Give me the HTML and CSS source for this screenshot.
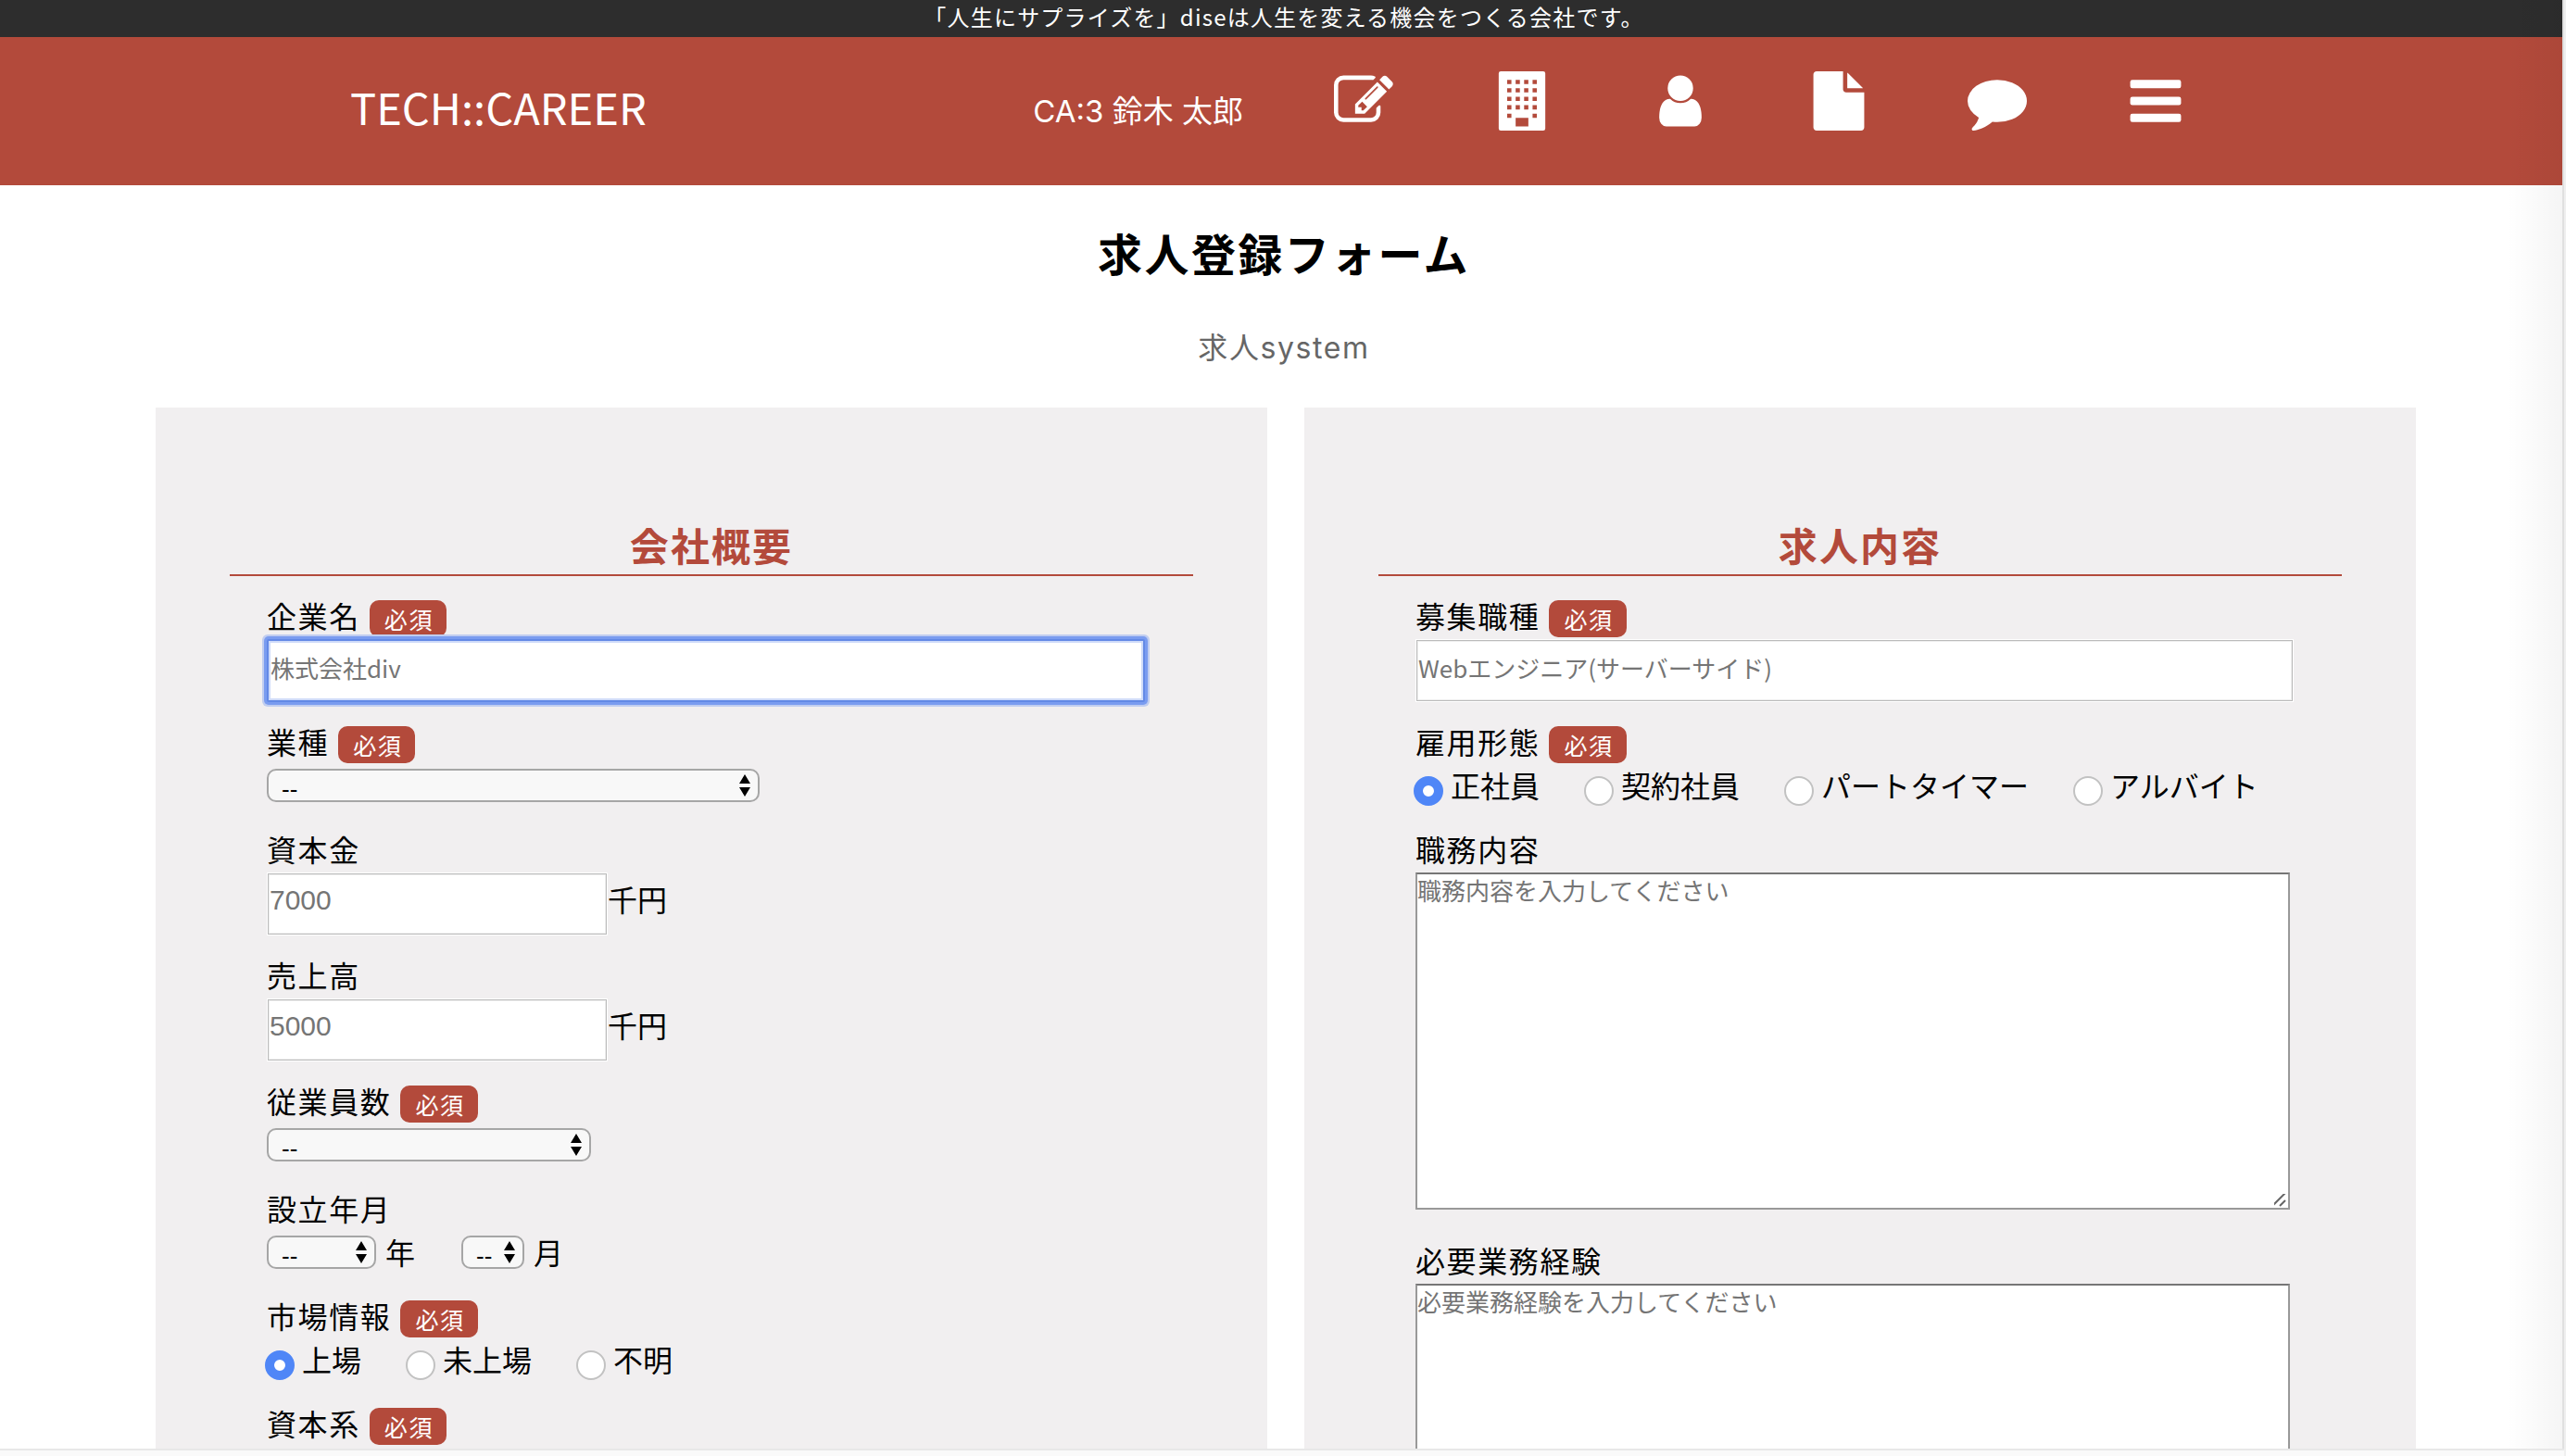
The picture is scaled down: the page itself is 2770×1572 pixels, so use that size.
FILE: index.html
```html
<!DOCTYPE html>
<html lang="ja">
<head>
<meta charset="utf-8">
<title>求人登録フォーム | TECH::CAREER</title>
<link rel="stylesheet" href="styles.css">
</head>
<body>
<div class="viewport">
  <p class="tagline">「人生にサプライズを」diseは人生を変える機会をつくる会社です。</p>
  <header class="header">
    <a class="logo" href="#">TECH::CAREER</a>
    <a class="user-name" href="#">CA:3 鈴木 太郎</a>
    <nav class="nav">
      <a class="nav-link" href="#" aria-label="求人登録"><svg class="icon" viewBox="0 0 1792 1792"><path d="M888 1184l116-116-152-152-116 116v56h96v96h56zm440-720q-16-16-33 1l-350 350q-17 17-1 33t33-1l350-350q17-17 1-33zm80 594v190q0 119-84.500 203.500t-203.500 84.500h-832q-119 0-203.500-84.500t-84.500-203.500v-832q0-119 84.500-203.500t203.500-84.500h832q63 0 117 25 15 7 18 23 3 17-9 29l-49 49q-14 14-32 8-23-6-45-6h-832q-66 0-113 47t-47 113v832q0 66 47 113t113 47h832q66 0 113-47t47-113v-126q0-13 9-22l64-64q15-15 35-7t20 29zm-96-738l288 288-672 672h-288v-288zm444 132l-92 92-288-288 92-92q28-28 68-28t68 28l152 152q28 28 28 68t-28 68z"/></svg></a>
      <a class="nav-link" href="#" aria-label="企業"><svg class="icon" viewBox="0 0 1792 1792"><path fill-rule="evenodd" d="M256 0h1280q64 0 64 64v1664q0 64-64 64h-1280q-64 0-64-64v-1664q0-64 64-64zM448 256v128h128v-128zM704 256v128h128v-128zM960 256v128h128v-128zM1216 256v128h128v-128zM448 512v128h128v-128zM704 512v128h128v-128zM960 512v128h128v-128zM1216 512v128h128v-128zM448 768v128h128v-128zM704 768v128h128v-128zM960 768v128h128v-128zM1216 768v128h128v-128zM448 1024v128h128v-128zM704 1024v128h128v-128zM960 1024v128h128v-128zM1216 1024v128h128v-128zM448 1280v128h128v-128zM1216 1280v128h128v-128zM704 1408v256h384v-256z"/></svg></a>
      <a class="nav-link" href="#" aria-label="ユーザー"><svg class="icon" viewBox="0 0 1792 1792"><path d="M1536 1399q0 109-62.500 187t-150.500 78h-854q-88 0-150.500-78t-62.500-187q0-85 8.500-160.500t31.500-152 58.500-131 94-89 134.500-34.500q131 128 313 128t313-128q76 0 134.500 34.500t94 89 58.500 131 31.500 152 8.500 160.500zm-256-887q0 159-112.500 271.500t-271.500 112.500-271.500-112.500-112.500-271.500 112.500-271.500 271.500-112.500 271.500 112.500 112.500 271.500z"/></svg></a>
      <a class="nav-link" href="#" aria-label="書類"><svg class="icon" viewBox="0 0 1792 1792"><path d="M1152 512v-472q22 14 36 28l408 408q14 14 28 36h-472zm-128 32q0 40 28 68t68 28h544v1056q0 40-28 68t-68 28h-1344q-40 0-68-28t-28-68v-1600q0-40 28-68t68-28h800v544z"/></svg></a>
      <a class="nav-link" href="#" aria-label="メッセージ"><svg class="icon" viewBox="0 0 1792 1792"><path d="M1792 896q0 174-120 321.500t-326 233-450 85.500q-70 0-145-8-198 175-460 242-49 14-114 22-17 2-30.500-9t-17.500-29v-1q-3-4-.5-12t2-10 4.500-9.500l6-9 7-8.500 8-9q7-8 31-34.500t34.500-38 31-39.500 32.500-51 27-59 26-76q-157-89-247.500-220t-90.500-281q0-130 71-248.500t191-204.500 286-136.500 348-50.500q244 0 450 85.500t326 233 120 321.500z"/></svg></a>
      <a class="nav-link" href="#" aria-label="メニュー"><svg class="icon" viewBox="0 0 1792 1792"><rect x="128" y="256" width="1536" height="256" rx="64"/><rect x="128" y="768" width="1536" height="256" rx="64"/><rect x="128" y="1280" width="1536" height="256" rx="64"/></svg></a>
    </nav>
  </header>

  <main>
    <h1 class="title">求人登録フォーム</h1>
    <p class="subtitle">求人system</p>
    <form class="panels">
      <section class="panel">
        <h2 class="panel-title">会社概要</h2>
        <div class="fields">
          <div class="field">
            <label class="label" for="company">企業名<span class="badge">必須</span></label>
            <input class="text focused" type="text" id="company" placeholder="株式会社div">
          </div>
          <div class="field">
            <label class="label" for="industry">業種<span class="badge">必須</span></label>
            <select class="select select-wide" id="industry"><option>--</option></select>
          </div>
          <div class="field">
            <label class="label" for="capital">資本金</label>
            <div class="amount"><input class="text number" type="text" id="capital" placeholder="7000"><span class="unit">千円</span></div>
          </div>
          <div class="field">
            <label class="label" for="sales">売上高</label>
            <div class="amount"><input class="text number" type="text" id="sales" placeholder="5000"><span class="unit">千円</span></div>
          </div>
          <div class="field">
            <label class="label" for="employees">従業員数<span class="badge">必須</span></label>
            <select class="select select-medium" id="employees"><option>--</option></select>
          </div>
          <div class="field">
            <span class="label">設立年月</span>
            <div class="dates">
              <label class="date"><select class="select select-year"><option>--</option></select>年</label>
              <label class="date"><select class="select select-month"><option>--</option></select>月</label>
            </div>
          </div>
          <div class="field">
            <span class="label">市場情報<span class="badge">必須</span></span>
            <div class="choices">
              <label class="choice"><input class="radio" type="radio" name="market" checked>上場</label>
              <label class="choice"><input class="radio" type="radio" name="market">未上場</label>
              <label class="choice"><input class="radio" type="radio" name="market">不明</label>
            </div>
          </div>
          <div class="field">
            <span class="label">資本系<span class="badge">必須</span></span>
          </div>
        </div>
      </section>

      <section class="panel">
        <h2 class="panel-title">求人内容</h2>
        <div class="fields">
          <div class="field">
            <label class="label" for="job">募集職種<span class="badge">必須</span></label>
            <input class="text" type="text" id="job" placeholder="Webエンジニア(サーバーサイド)">
          </div>
          <div class="field">
            <span class="label">雇用形態<span class="badge">必須</span></span>
            <div class="choices">
              <label class="choice"><input class="radio" type="radio" name="employment" checked>正社員</label>
              <label class="choice"><input class="radio" type="radio" name="employment">契約社員</label>
              <label class="choice"><input class="radio" type="radio" name="employment">パートタイマー</label>
              <label class="choice"><input class="radio" type="radio" name="employment">アルバイト</label>
            </div>
          </div>
          <div class="field">
            <label class="label" for="duties">職務内容</label>
            <textarea class="textarea" id="duties" placeholder="職務内容を入力してください"></textarea>
          </div>
          <div class="field">
            <label class="label" for="experience">必要業務経験</label>
            <textarea class="textarea" id="experience" placeholder="必要業務経験を入力してください"></textarea>
          </div>
        </div>
      </section>
    </form>
  </main>
</div>
<div class="scroll-track"></div>
</body>
</html>
```
FILE: styles.css
```css
* {
  box-sizing: border-box;
}

body {
  display: flex;
  flex-direction: column;
  height: 100vh;
  margin: 0;
  overflow: hidden;
  border-right: 2px solid #f0f0f0;
  background: #fff;
  color: #000;
  font-family: "Noto Sans CJK JP", sans-serif;
  font-size: 32px;
}

a {
  color: inherit;
  text-decoration: none;
}

.viewport {
  position: relative;
  flex: 1;
  min-height: 0;
  overflow: hidden;
  border-right: 2px solid #e0e0e0;
}

.viewport::after {
  content: "";
  position: absolute;
  inset: 0 0 0 auto;
  width: 60px;
  background: linear-gradient(to right, transparent, rgba(0, 0, 0, 0.04));
  pointer-events: none;
}

.scroll-track {
  height: 8px;
  border-top: 2px solid #e8e8e8;
  background: #fafafa;
}

.tagline {
  margin: 0;
  padding: 0 0 4px 6px;
  background: #2d2d2d;
  color: #fff;
  font-size: 24px;
  line-height: 36px;
  letter-spacing: 0.05em;
  text-align: center;
}

.header {
  display: flex;
  align-items: center;
  height: 160px;
  padding: 0 354px 0 378px;
  background: #b34a3b;
  color: #fff;
}

.logo {
  padding-bottom: 10px;
  font-size: 47px;
  line-height: 72px;
}

.user-name {
  margin-left: auto;
  padding-bottom: 4px;
  font-family: Inter, "Noto Sans CJK JP", sans-serif;
  font-size: 33px;
}

.nav {
  display: flex;
  margin-left: 44px;
  padding-bottom: 22px;
}

.nav-link {
  display: flex;
  justify-content: center;
  width: 171px;
}

.icon {
  width: 64px;
  height: 64px;
  fill: #fff;
}

.title {
  margin: 36px 0 0;
  padding-left: 6px;
  font-size: 48px;
  line-height: 72px;
  letter-spacing: 0.05em;
  text-align: center;
}

.subtitle {
  margin: 44px 0 40px;
  padding-left: 6px;
  color: #666;
  font-family: Inter, "Noto Sans CJK JP", sans-serif;
  line-height: 48px;
  letter-spacing: 0.05em;
  text-align: center;
}

.panels {
  display: grid;
  grid-template-columns: 1fr 1fr;
  gap: 40px;
  padding: 0 158px 0 168px;
}

.panel {
  padding: 120px 80px;
  background: #f1eff0;
}

.panel-title {
  margin: 0 0 26px;
  padding-bottom: 4px;
  border-bottom: 2px solid #b34a3b;
  color: #b34a3b;
  font-size: 42px;
  line-height: 56px;
  letter-spacing: 0.05em;
  text-align: center;
}

.fields {
  display: flex;
  flex-direction: column;
  gap: 26px;
  padding: 0 40px;
}

.field {
  display: flex;
  flex-direction: column;
  align-items: flex-start;
  gap: 2px;
}

.label {
  display: flex;
  align-items: flex-start;
  gap: 10px;
  height: 40px;
  line-height: 32px;
  letter-spacing: 0.05em;
}

.badge {
  padding: 0 14px 0 16px;
  border-radius: 10px;
  background: #b34a3b;
  color: #fff;
  font-size: 25px;
  line-height: 40px;
}

.text {
  width: calc(100% - 12px);
  height: 68px;
  padding: 2px 2px 10px;
  border: 1px solid #fff;
  background: #fff;
  box-shadow: inset 0 0 0 1px #bbb, inset 0 0 0 2px #eee;
  font-family: inherit;
  font-size: 26px;
}

.text::placeholder,
.textarea::placeholder {
  color: #757575;
}

.focused {
  position: relative;
  border: 2px solid #6389e6;
  border-radius: 2px;
  outline: none;
  box-shadow: 0 0 0 3px #7a9cf0, 0 0 0 5px #c0cdf0, inset 0 0 0 2px #cfdbf9;
}

.amount {
  display: flex;
  align-items: center;
}

.number {
  width: 368px;
  font-family: "Liberation Sans", sans-serif;
  font-size: 30px;
}

.unit {
  padding-bottom: 12px;
}

.select {
  height: 36px;
  margin: 4px 0 8px;
  padding: 8px 0 0 14px;
  border: 2px solid #a6a6a6;
  border-radius: 10px;
  appearance: none;
  background: #f8f8f8 url("data:image/svg+xml,%3Csvg xmlns='http://www.w3.org/2000/svg' width='12' height='24'%3E%3Cpath d='M0 10 6 0 12 10zM0 14 6 24 12 14z'/%3E%3C/svg%3E") no-repeat right 8px center;
  color: #000;
  font-family: "Liberation Sans", "Noto Sans CJK JP", sans-serif;
  font-size: 26px;
  line-height: 24px;
}

.select-wide {
  width: 532px;
}

.select-medium {
  width: 350px;
}

.select-year {
  width: 118px;
}

.select-month {
  width: 68px;
}

.dates {
  display: flex;
  gap: 50px;
}

.date {
  display: flex;
  align-items: flex-start;
  gap: 10px;
  height: 48px;
  line-height: 42px;
}

.choices {
  display: flex;
  gap: 48px;
  margin-left: -2px;
}

.choice {
  display: flex;
  align-items: flex-start;
  gap: 8px;
  height: 48px;
  line-height: 42px;
}

.radio {
  width: 32px;
  height: 32px;
  margin: 12px 0 0;
  border: 2px solid #c2c2c2;
  border-radius: 50%;
  appearance: none;
  background: #fff;
}

.radio:checked {
  border: 10px solid #4f86f7;
}

.textarea {
  width: calc(100% - 16px);
  height: 364px;
  margin-bottom: 12px;
  padding: 0;
  border: 2px solid #999;
  border-top-color: #767676;
  background: #fff;
  font-family: inherit;
  font-size: 26px;
  line-height: 34px;
}

.textarea::-webkit-resizer {
  background: url("data:image/svg+xml,%3Csvg xmlns='http://www.w3.org/2000/svg' width='18' height='18'%3E%3Cpath d='M1 16 15 2M9 16 15 10' stroke='%23666' stroke-width='2'/%3E%3C/svg%3E") no-repeat right bottom;
}
```
